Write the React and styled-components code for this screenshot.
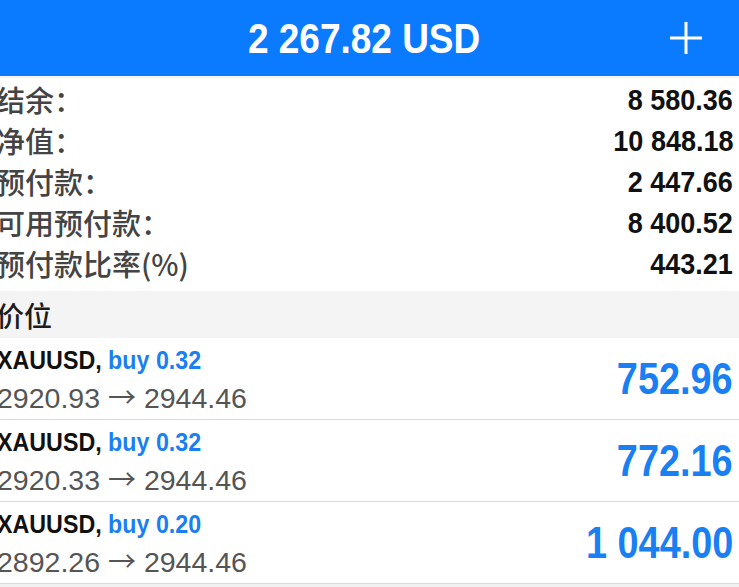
import React from "react";
import styled, { createGlobalStyle } from "styled-components";

const GlobalStyle = createGlobalStyle`
  html, body {
    margin: 0;
    padding: 0;
    background: #f1f1f1;
    overflow: hidden;
  }
  body {
    font-family: "Liberation Sans", Arial, "Noto Sans CJK SC", sans-serif;
  }
`;

const BOLD = `"Liberation Sans", Arial, sans-serif`;
const CJK = `"Noto Sans CJK SC", "Liberation Sans", sans-serif`;
const BLUE = "#1a7ff2";

const Screen = styled.div`
  width: 739px;
  background: #fff;
  display: flex;
  flex-direction: column;
`;

const Header = styled.header`
  height: 76px;
  background: #0a7bff;
  display: grid;
  grid-template-columns: 1fr auto 1fr;
  align-items: center;
  padding-right: 11px;
  border-bottom: 2px solid #f7f5ee;
`;

const Title = styled.h1`
  grid-column: 2;
  margin: 0;
  color: #fff;
  font-family: ${BOLD};
  font-weight: 700;
  font-size: 43px;
  line-height: 1;
  transform: scaleX(0.86);
  transform-origin: center;
`;

const AddButton = styled.button`
  grid-column: 3;
  justify-self: end;
  margin-right: 25px;
  width: 34px;
  height: 34px;
  padding: 0;
  border: 0;
  background: transparent;
  display: flex;
  align-items: center;
  justify-content: center;
`;

const Summary = styled.section`
  padding: 1px 6px 7px 0;
  display: flex;
  flex-direction: column;
`;

const SummaryRow = styled.div`
  height: 41px;
  display: flex;
  align-items: center;
  justify-content: space-between;
`;

const Label = styled.span`
  margin-left: -4px;
  font-family: ${CJK};
  font-size: 29px;
  font-weight: 500;
  line-height: 41px;
  color: #444;
`;

const Amount = styled.span`
  display: inline-block;
  font-family: ${BOLD};
  font-weight: 700;
  font-size: 30px;
  color: #111;
  transform: scaleX(0.9);
  transform-origin: right center;
`;

const SectionTitle = styled.div`
  height: 47px;
  background: #f4f4f4;
  display: flex;
  align-items: center;
  font-family: ${CJK};
  font-size: 28px;
  font-weight: 500;
  color: #1c1c1c;
  & > span {
    margin-left: -4px;
  }
`;

const Position = styled.div`
  height: 81px;
  border-bottom: 1px solid #dadada;
  display: grid;
  grid-template-columns: 1fr auto;
  align-items: center;
  padding-right: 6px;
  background: #fff;
`;

const PosInfo = styled.div`
  align-self: start;
  padding-top: 7px;
  margin-left: -3px;
  display: flex;
  flex-direction: column;
  gap: 5px;
`;

const Symbol = styled.div`
  height: 30px;
  line-height: 30px;
  font-family: ${BOLD};
  font-weight: 700;
  font-size: 25px;
  color: #111;
  white-space: nowrap;
  transform: scaleX(0.93);
  transform-origin: left center;
`;

const Side = styled.span`
  color: ${BLUE};
`;

const Prices = styled.div`
  line-height: 36px;
  height: 36px;
  font-family: "Liberation Sans", Arial, sans-serif;
  font-size: 28.5px;
  color: #555;
  white-space: nowrap;
`;

const Arrow = styled.span`
  font-family: "Noto Sans CJK SC", sans-serif;
  font-size: 28px;
  font-weight: 400;
  line-height: 0;
  color: #555;
`;

const Profit = styled.span`
  display: inline-block;
  font-family: ${BOLD};
  font-weight: 700;
  font-size: 44px;
  color: ${BLUE};
  transform: scaleX(0.86);
  transform-origin: right center;
`;

const summary = [
  ["结余：", "8 580.36"],
  ["净值：", "10 848.18"],
  ["预付款：", "2 447.66"],
  ["可用预付款：", "8 400.52"],
  ["预付款比率(%)", "443.21"],
];

const positions = [
  { symbol: "XAUUSD", side: "buy 0.32", open: "2920.93", cur: "2944.46", profit: "752.96" },
  { symbol: "XAUUSD", side: "buy 0.32", open: "2920.33", cur: "2944.46", profit: "772.16" },
  { symbol: "XAUUSD", side: "buy 0.20", open: "2892.26", cur: "2944.46", profit: "1 044.00" },
];

export default function App() {
  return (
    <>
      <GlobalStyle />
      <Screen>
        <Header>
          <Title>2 267.82 USD</Title>
          <AddButton aria-label="add">
            <svg width="34" height="34" viewBox="0 0 34 34">
              <path d="M17 1V33M1 17H33" stroke="#fff" strokeWidth="3" fill="none" />
            </svg>
          </AddButton>
        </Header>
        <Summary>
          {summary.map(([label, value]) => (
            <SummaryRow key={label}>
              <Label>{label}</Label>
              <Amount>{value}</Amount>
            </SummaryRow>
          ))}
        </Summary>
        <SectionTitle>
          <span>价位</span>
        </SectionTitle>
        {positions.map((p, i) => (
          <Position key={i}>
            <PosInfo>
              <Symbol>
                {p.symbol}, <Side>{p.side}</Side>
              </Symbol>
              <Prices>
                {p.open} <Arrow>→</Arrow> {p.cur}
              </Prices>
            </PosInfo>
            <Profit>{p.profit}</Profit>
          </Position>
        ))}
      </Screen>
    </>
  );
}
